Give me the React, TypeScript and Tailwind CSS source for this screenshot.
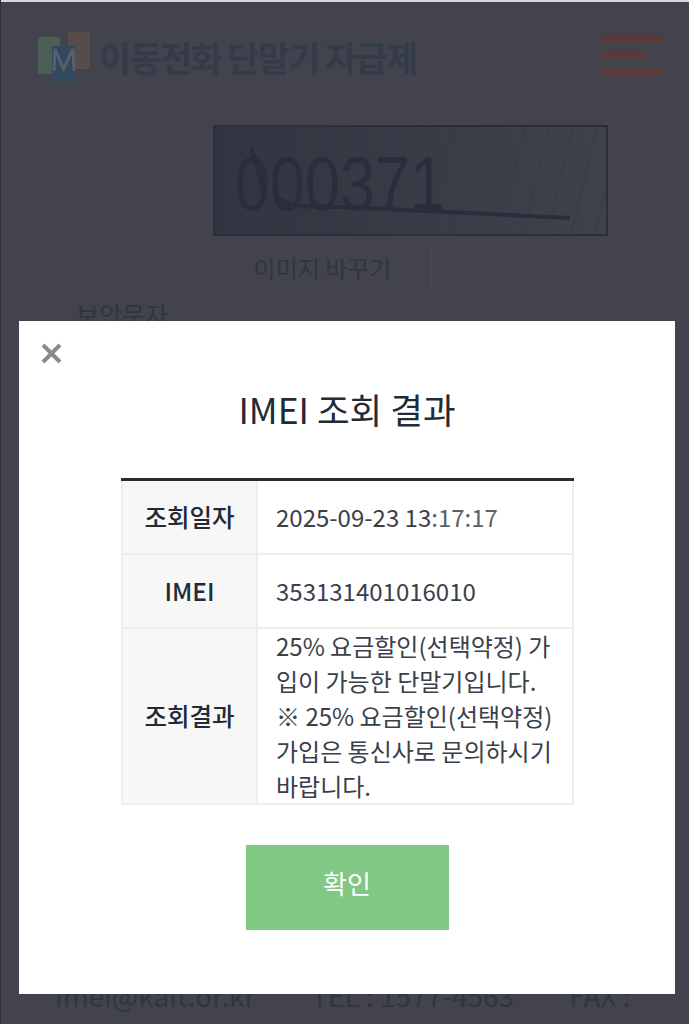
import React from 'react';

const kr = "font-['Noto_Sans_CJK_KR','Noto_Sans',sans-serif]";

function Logo() {
  return (
    <svg width="54" height="52" viewBox="0 0 54 52" className="shrink-0">
      <rect x="1" y="6" width="22" height="37" rx="1" fill="#4a5e55" />
      <rect x="31" y="1" width="22" height="37" rx="1" fill="#574c4b" />
      <rect x="15" y="15" width="23" height="36" rx="1" fill="#33485f" />
      <path d="M17 40 L18 18 L26.5 38 L36 18 L37 40" fill="none" stroke="#5a5e6a" strokeWidth="3" />
    </svg>
  );
}

function Captcha() {
  const stripes = Array.from({ length: 16 }, (_, i) => 30 + i * 24);
  return (
    <div className="h-[111px] w-[395px] border-2 border-[#2c2f3b] bg-gradient-to-r from-[#303541] to-[#3e424c]">
      <svg width="391" height="107" viewBox="0 0 391 107">
        {stripes.map((x) => (
          <line key={x} x1={x + 16} y1="0" x2={x - 10} y2="107" stroke="#3a3a45" strokeWidth="2" opacity="0.4" />
        ))}
        <text x="20" y="83" fontSize="76" textLength="210" lengthAdjust="spacingAndGlyphs" fill="#2b2e3a" fontFamily="Liberation Sans, sans-serif">
          000371
        </text>
        <path d="M36 19 L50 69 M65 72 C 80 82 96 79 128 80 L 355 91" fill="none" stroke="#2b2e3a" strokeWidth="4" />
      </svg>
    </div>
  );
}

function ResultRow({ label, heightClass, children }: { label: string; heightClass: string; children: React.ReactNode }) {
  return (
    <div className={`flex ${heightClass} border-b-2 border-[#eeeeee]`}>
      <div className="flex w-[137px] shrink-0 items-center justify-center border-x-2 border-[#eeeeee] bg-[#f7f7f7] text-[24.5px] font-medium text-[#222a35]">
        {label}
      </div>
      <div className="flex flex-1 items-center border-r-2 border-[#eeeeee] pb-[2px] pl-[18px] pr-2 text-[24px] leading-[35px] text-[#3a4049]">
        {children}
      </div>
    </div>
  );
}

function Modal() {
  return (
    <div className="absolute left-[18px] top-[321px] h-[673px] w-[656px] bg-white">
      <button className="absolute left-[20px] top-[19px] text-[#8a8a8a]">
        <svg width="26" height="26" viewBox="0 0 26 26" className="block">
          <path d="M4 5 L21 22 M21 5 L4 22" stroke="currentColor" strokeWidth="4" />
        </svg>
      </button>
      <h2 className="pt-[63px] text-center text-[35.5px] leading-[50px] text-[#222a35]">IMEI 조회 결과</h2>
      <div className="ml-[102px] mt-[44px] w-[453px] border-t-[3px] border-[#2b2b2f]">
        <ResultRow label="조회일자" heightClass="h-[74px]">
          <span>
            2025-09-23 13<span className="text-[#5c6068]">:17:17</span>
          </span>
        </ResultRow>
        <ResultRow label="IMEI" heightClass="h-[74px]">
          353131401016010
        </ResultRow>
        <ResultRow label="조회결과" heightClass="h-[176px]">
          <p>
            25% 요금할인(선택약정) 가입이 가능한 단말기입니다.
            <br />※ 25% 요금할인(선택약정) 가입은 통신사로 문의하시기 바랍니다.
          </p>
        </ResultRow>
      </div>
      <button className="mx-auto mt-[40px] block h-[85px] w-[203px] bg-[#80c883] pb-[10px] text-[26px] text-white">확인</button>
    </div>
  );
}

export default function App() {
  return (
    <div className={`relative flex h-[1024px] w-[689px] flex-col overflow-hidden border-l border-[#2f3038] bg-[#42434d] ${kr}`}>
      <div className="h-[2px] bg-[#d8d8da]" />
      <header className="flex h-[111px] items-center justify-between border-b border-[#474852] pl-[36px] pr-[25px]">
        <div className="flex items-center gap-[8px]">
          <Logo />
          <span className="text-[35px] font-bold tracking-[-1.7px] text-[#333b4a]">이동전화 단말기 자급제</span>
        </div>
        <div className="mb-[5px] flex w-[62px] flex-col gap-[11px]">
          <div className="h-[6px] w-full bg-[#5e3839]" />
          <div className="h-[6px] w-[44px] bg-[#5e3839]" />
          <div className="h-[6px] w-full bg-[#5e3839]" />
        </div>
      </header>
      <section className="pl-[212px] pt-[12px]">
        <Captcha />
        <button className="mt-[7px] block h-[50px] w-[219px] border border-[#484954] text-[24px] text-[#2f3541]">이미지 바꾸기</button>
      </section>
      <div className="pl-[75px] pt-[3px] text-[25px] text-[#2f3541]">보안문자</div>
      <footer className="mt-auto flex pb-[10px] pl-[54px] text-[28px] leading-[38px] text-[#2f3541]">
        <span>imei@kait.or.kr</span>
        <span className="ml-[56px]">TEL : 1577-4563</span>
        <span className="ml-[55px]">FAX :</span>
      </footer>
      <Modal />
    </div>
  );
}
